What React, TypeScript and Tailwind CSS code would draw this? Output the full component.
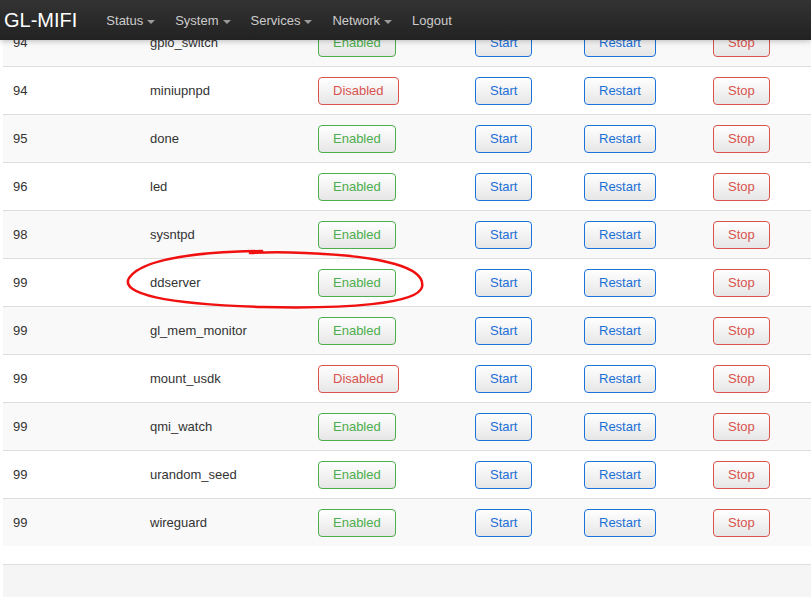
import React from "react";

type Row = { n: string; name: string; on: boolean };

const rows: Row[] = [
  { n: "94", name: "gpio_switch", on: true },
  { n: "94", name: "miniupnpd", on: false },
  { n: "95", name: "done", on: true },
  { n: "96", name: "led", on: true },
  { n: "98", name: "sysntpd", on: true },
  { n: "99", name: "ddserver", on: true },
  { n: "99", name: "gl_mem_monitor", on: true },
  { n: "99", name: "mount_usdk", on: false },
  { n: "99", name: "qmi_watch", on: true },
  { n: "99", name: "urandom_seed", on: true },
  { n: "99", name: "wireguard", on: true },
];

const btnBase =
  "inline-block rounded-[4px] border px-[14px] py-[4px] text-[13px] leading-[18px] bg-gradient-to-b from-white to-[#e6e6e6] whitespace-nowrap";

function Caret() {
  return (
    <span className="ml-[4px] inline-block h-0 w-0 border-l-[4px] border-r-[4px] border-t-[4px] border-l-transparent border-r-transparent border-t-[#9a9a9a] align-middle" />
  );
}

export default function App() {
  return (
    <div
      className="relative h-[597px] w-[811px] overflow-hidden bg-white"
      style={{ fontFamily: '"Liberation Sans", Arial, sans-serif' }}
    >
      <div className="pl-[3px] pt-[18px]">
        {rows.map((r, i) => (
          <div
            key={r.name}
            className={`grid h-[48px] grid-cols-[137px_168px_157px_109px_129px_1fr] items-center border-t border-[#dddddd] text-[13px] text-[#333333] ${
              i % 2 === 0 ? "bg-[#f9f9f9]" : "bg-white"
            }`}
          >
            <div className="pl-[10px]">{r.n}</div>
            <div className="pl-[10px]">{r.name}</div>
            <div className="pl-[10px]">
              {r.on ? (
                <span className={`${btnBase} border-[#4cae4c] text-[#4cae4c]`}>Enabled</span>
              ) : (
                <span className={`${btnBase} border-[#d9534f] text-[#d9534f]`}>Disabled</span>
              )}
            </div>
            <div className="pl-[10px]">
              <span className={`${btnBase} border-[#1a73d9] text-[#1a6fd6]`}>Start</span>
            </div>
            <div className="pl-[10px]">
              <span className={`${btnBase} border-[#1a73d9] text-[#1a6fd6]`}>Restart</span>
            </div>
            <div className="pl-[10px]">
              <span className={`${btnBase} border-[#d9534f] text-[#d9534f]`}>Stop</span>
            </div>
          </div>
        ))}
        <div className="h-[18px] bg-white" />
        <div className="h-[40px] border-t border-[#dddddd] bg-[#f5f5f5]" />
      </div>

      {/* fixed top navbar */}
      <div className="absolute left-0 top-0 flex h-[40px] w-full items-center bg-gradient-to-b from-[#333333] to-[#222222] shadow-[0_1px_6px_rgba(0,0,0,0.25)]">
        <div className="ml-[4px] text-[20px] leading-[24px] text-white">GL-MIFI</div>
        <nav className="ml-[19px] mt-[2px] flex items-center text-[13px] leading-[18px] text-[#cccccc]">
          <span className="px-[10px]">
            Status
            <Caret />
          </span>
          <span className="px-[10px]">
            System
            <Caret />
          </span>
          <span className="px-[10px]">
            Services
            <Caret />
          </span>
          <span className="px-[10px]">
            Network
            <Caret />
          </span>
          <span className="px-[10px]">Logout</span>
        </nav>
      </div>

      {/* red hand-drawn annotation */}
      <svg
        className="pointer-events-none absolute left-0 top-0"
        width="811"
        height="597"
        viewBox="0 0 811 597"
      >
        <path
          d="M 262 251 C 195 252 142 259 129 278 C 120 294 165 304 262 307 C 345 309 418 304 422 287 C 426 268 385 256 305 253 C 285 252 268 252 250 253"
          fill="none"
          stroke="#f01010"
          strokeWidth="2.5"
          strokeLinecap="round"
        />
      </svg>
    </div>
  );
}
